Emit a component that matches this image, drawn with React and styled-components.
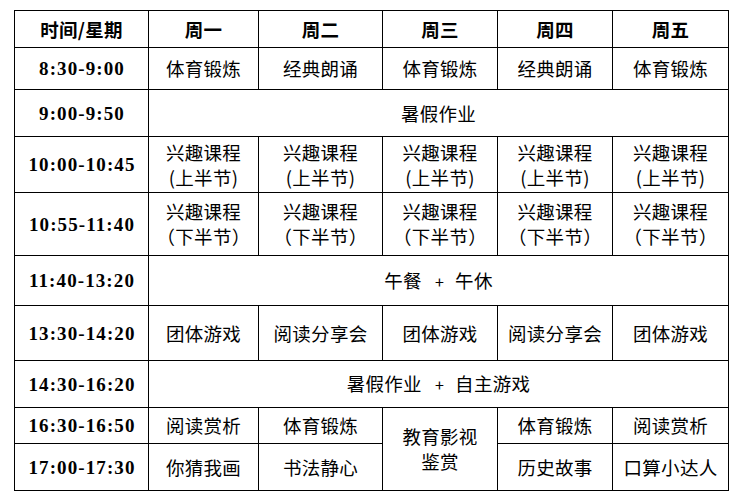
import React from 'react';
import styled, { createGlobalStyle } from 'styled-components';

const GlobalStyle = createGlobalStyle`
  body {
    margin: 0;
    background: #fff;
    font-family: "Noto Sans CJK SC", "Noto Sans", sans-serif;
    color: #000;
  }
`;

const Page = styled.div`
  padding: 10px 0 0 14px;
`;

const Table = styled.table`
  border-collapse: collapse;
  table-layout: fixed;
  width: 715px;
`;

const Row = styled.tr`
  height: ${(props) => props.h}px;
`;

const Cell = styled.td`
  border: 1px solid #000;
  padding: 0;
  text-align: center;
  vertical-align: middle;
  font-size: 18.5px;
  line-height: 25px;
  font-weight: 400;
  letter-spacing: 0.3px;
`;

const HeadCell = styled(Cell).attrs({ as: 'th' })`
  font-weight: 700;
  font-size: 18.5px;
`;

const TimeCell = styled(Cell)`
  font-family: "Liberation Serif", "DejaVu Serif", serif;
  font-weight: 700;
  font-size: 19px;
  letter-spacing: 1.1px;
  padding-left: 1px;
`;

const Plus = styled.span`
  display: inline-block;
  margin: 0 11px 0 13px;
  font-size: 16px;
`;

const days = ['周一', '周二', '周三', '周四', '周五'];

const rows = [
  { time: '8:30-9:00', h: 42, cells: ['体育锻炼', '经典朗诵', '体育锻炼', '经典朗诵', '体育锻炼'] },
  { time: '9:00-9:50', h: 47, span: ['暑假作业'] },
  { time: '10:00-10:45', h: 56, cells: Array(5).fill(['兴趣课程', '(上半节)']) },
  { time: '10:55-11:40', h: 63, cells: Array(5).fill(['兴趣课程', '（下半节）']) },
  { time: '11:40-13:20', h: 50, span: ['午餐', '午休'] },
  { time: '13:30-14:20', h: 55, cells: ['团体游戏', '阅读分享会', '团体游戏', '阅读分享会', '团体游戏'] },
  { time: '14:30-16:20', h: 47, span: ['暑假作业', '自主游戏'] },
];

const lines = (v) =>
  Array.isArray(v) ? v.map((t, i) => <div key={i}>{t}</div>) : v;

const joined = (parts) =>
  parts.map((p, i) => (
    <React.Fragment key={i}>
      {i > 0 && <Plus>+</Plus>}
      {p}
    </React.Fragment>
  ));

export default function App() {
  return (
    <Page>
      <GlobalStyle />
      <Table>
        <colgroup>
          <col style={{ width: 134 }} />
          <col style={{ width: 110 }} />
          <col style={{ width: 124 }} />
          <col style={{ width: 115 }} />
          <col style={{ width: 115 }} />
          <col style={{ width: 116 }} />
        </colgroup>
        <tbody>
          <Row h={37}>
            <HeadCell>时间/星期</HeadCell>
            {days.map((d) => (
              <HeadCell key={d}>{d}</HeadCell>
            ))}
          </Row>
          {rows.map((r) => (
            <Row key={r.time} h={r.h}>
              <TimeCell>{r.time}</TimeCell>
              {r.span ? (
                <Cell colSpan={5}>{joined(r.span)}</Cell>
              ) : (
                r.cells.map((c, i) => <Cell key={i}>{lines(c)}</Cell>)
              )}
            </Row>
          ))}
          <Row h={36}>
            <TimeCell>16:30-16:50</TimeCell>
            <Cell>阅读赏析</Cell>
            <Cell>体育锻炼</Cell>
            <Cell rowSpan={2}>
              <div>教育影视</div>
              <div>鉴赏</div>
            </Cell>
            <Cell>体育锻炼</Cell>
            <Cell>阅读赏析</Cell>
          </Row>
          <Row h={47}>
            <TimeCell>17:00-17:30</TimeCell>
            <Cell>你猜我画</Cell>
            <Cell>书法静心</Cell>
            <Cell>历史故事</Cell>
            <Cell>口算小达人</Cell>
          </Row>
        </tbody>
      </Table>
    </Page>
  );
}
